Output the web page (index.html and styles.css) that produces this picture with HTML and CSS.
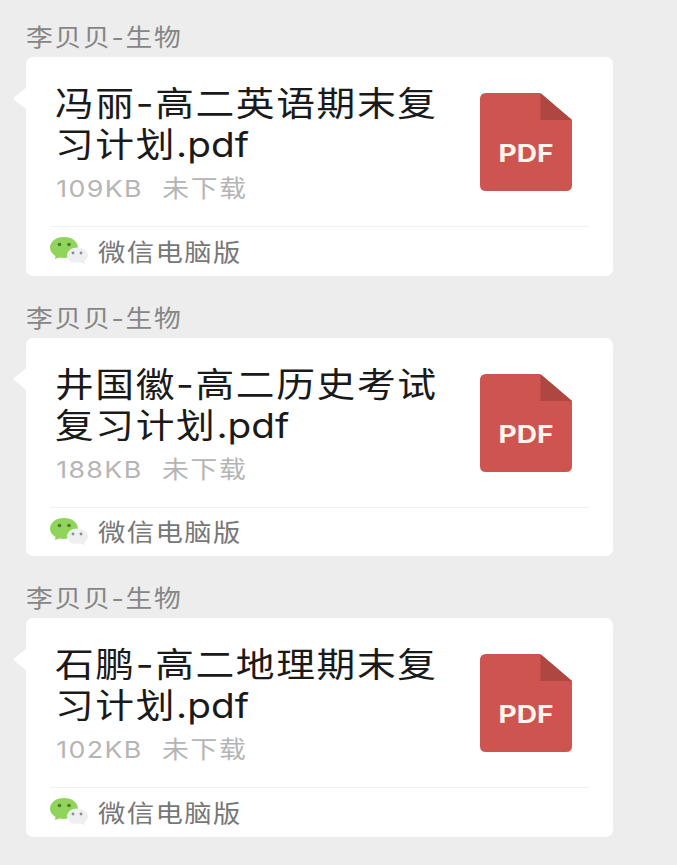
FILE: index.html
```
<!DOCTYPE html>
<html lang="zh-CN">
<head>
    <meta charset="UTF-8">
    <meta name="viewport" content="width=device-width, initial-scale=1.0">
    <title>聊天文件</title>
    <link rel="stylesheet" href="styles.css">
</head>
<body>
    <!-- Общие иконки -->
    <svg class="sprite" aria-hidden="true">
        <symbol id="pdf" viewBox="0 0 92 98">
            <path d="M6 0H60L92 27V92Q92 98 86 98H6Q0 98 0 92V6Q0 0 6 0Z" fill="#cd544f"/>
            <path d="M60.500 0L92 27H60.500Z" fill="#ae4742"/>
            <text x="46" y="68.500" class="pdf-label" textLength="55" lengthAdjust="spacingAndGlyphs">PDF</text>
        </symbol>
        <symbol id="wechat" viewBox="0 0 38 28">
            <path d="M14 0C6 0 0 4.700 0 10.500C0 14 2 17 5.500 19L5 22L9.500 20.500C18 22.500 28 18 28 10.500C28 4.700 22 0 14 0Z" fill="#91d45b"/>
            <circle cx="9.500" cy="7.500" r="1.800" fill="#477b2c"/>
            <circle cx="19" cy="7.500" r="1.800" fill="#477b2c"/>
            <path d="M27.500 10.500C21.500 10.500 17 14 17 18.500C17 23.500 23 27 30 25.500L35 27L34.500 24C36.800 22.500 38 20.500 38 18.300C38 14 33.500 10.500 27.500 10.500Z" fill="#eeeff1"/>
            <circle cx="23" cy="16" r="1.400" fill="#8b8f94"/>
            <circle cx="31" cy="16" r="1.400" fill="#8b8f94"/>
        </symbol>
    </svg>

    <div class="chat">
        <div class="message">
            <div class="sender">李贝贝-生物</div>
            <div class="card">
                <div class="file">
                    <div class="info">
                        <div class="title">冯丽-高二英语期末复<br>习计划<span class="ext">.pdf</span></div>
                        <div class="meta"><span class="size">109KB</span><span>未下载</span></div>
                    </div>
                    <svg class="pdf-icon"><use href="#pdf"/></svg>
                </div>
                <div class="source">
                    <svg class="wechat-icon"><use href="#wechat"/></svg>
                    <span class="source-name">微信电脑版</span>
                </div>
            </div>
        </div>

        <div class="message">
            <div class="sender">李贝贝-生物</div>
            <div class="card">
                <div class="file">
                    <div class="info">
                        <div class="title">井国徽-高二历史考试<br>复习计划<span class="ext">.pdf</span></div>
                        <div class="meta"><span class="size">188KB</span><span>未下载</span></div>
                    </div>
                    <svg class="pdf-icon"><use href="#pdf"/></svg>
                </div>
                <div class="source">
                    <svg class="wechat-icon"><use href="#wechat"/></svg>
                    <span class="source-name">微信电脑版</span>
                </div>
            </div>
        </div>

        <div class="message">
            <div class="sender">李贝贝-生物</div>
            <div class="card">
                <div class="file">
                    <div class="info">
                        <div class="title">石鹏-高二地理期末复<br>习计划<span class="ext">.pdf</span></div>
                        <div class="meta"><span class="size">102KB</span><span>未下载</span></div>
                    </div>
                    <svg class="pdf-icon"><use href="#pdf"/></svg>
                </div>
                <div class="source">
                    <svg class="wechat-icon"><use href="#wechat"/></svg>
                    <span class="source-name">微信电脑版</span>
                </div>
            </div>
        </div>
    </div>
</body>
</html>
```
FILE: styles.css
```
* {
    box-sizing: border-box;
}
body {
    margin: 0;
    background: #ededed;
    font-family: Inter, "Noto Sans CJK SC", sans-serif;
}
.sprite {
    display: none;
}
.chat {
    padding: 17px 0 0 26px;
}
.message {
    width: 587px;
    height: 280.5px;
}
/* широкое начертание текста */
.sender, .title, .meta, .source-name {
    transform: scaleX(1.14);
    transform-origin: left center;
    white-space: nowrap;
}
.sender {
    height: 40px;
    line-height: 41px;
    font-size: 23.5px;
    letter-spacing: 1.5px;
    color: #868686;
}
.card {
    position: relative;
    height: 218.5px;
    padding: 0 24px;
    background: #fff;
    border-radius: 7px;
}
.card::before {
    content: "";
    position: absolute;
    left: -12px;
    top: 30px;
    width: 13px;
    height: 23px;
    background: #fff;
    clip-path: polygon(0 46%, 0 54%, 100% 100%, 100% 0);
}
.file {
    display: flex;
    justify-content: space-between;
    height: 170px;
    padding: 26px 17px 0 5px;
    border-bottom: 1px solid #f0f0f0;
}
.info {
    width: 340px;
}
.title {
    font-size: 34px;
    line-height: 41px;
    letter-spacing: 1.4px;
    color: #1a1a1a;
}
.ext {
    letter-spacing: 0;
}
.meta {
    display: flex;
    gap: 17px;
    margin-top: 7px;
    padding-left: 1px;
    font-size: 23.5px;
    line-height: 34px;
    letter-spacing: 1.5px;
    color: #b5b5b5;
}
.size {
    letter-spacing: 1.2px;
}
.pdf-icon {
    width: 92px;
    height: 98px;
    margin-top: 10px;
}
.pdf-label {
    font-family: Inter, sans-serif;
    font-size: 24px;
    font-weight: 700;
    text-anchor: middle;
    fill: #fff5ea;
}
.source {
    display: flex;
    align-items: center;
    height: 48px;
}
.wechat-icon {
    width: 38px;
    height: 28px;
    margin-right: 10px;
}
.source-name {
    margin-top: -2px;
    font-size: 24px;
    letter-spacing: 1.2px;
    color: #777;
}
```
